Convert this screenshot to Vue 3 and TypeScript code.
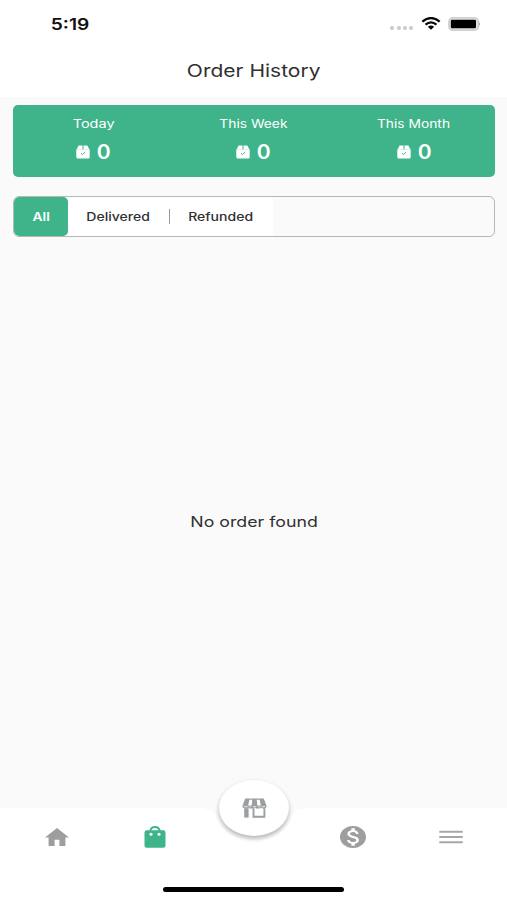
<script setup lang="ts">
import { ref } from 'vue'

interface Stat {
  label: string
  count: number
  key: string
}

const stats: Stat[] = [
  { label: 'Today', count: 0, key: 'today' },
  { label: 'This Week', count: 0, key: 'week' },
  { label: 'This Month', count: 0, key: 'month' },
]

const tabs: string[] = ['All', 'Delivered', 'Refunded']
const active = ref<string>('All')
</script>

<template>
  <div class="screen">
    <header class="top">
      <div class="status">
        <span class="time"><span class="wide">5:19</span></span>
        <div class="signals">
          <span class="dots"><i v-for="n in 4" :key="n"></i></span>
          <svg class="wifi" viewBox="0 0 20 13" preserveAspectRatio="none">
            <path d="M1.3 4.7Q10-2.6 18.7 4.7M4.5 7.6Q10 3.1 15.5 7.6" fill="none" stroke="#080808" stroke-width="2.3" />
            <path d="M6.8 9.8Q10 7.2 13.2 9.8L10 12.8Z" fill="#080808" />
          </svg>
          <svg class="battery" viewBox="0 0 33 14">
            <rect x=".9" y=".9" width="29.4" height="12.2" rx="3.6" fill="#e6e6e6" stroke="#c4c4c4" stroke-width="1.3" />
            <rect x="2.8" y="2.8" width="25.2" height="8.4" rx="1.2" fill="#000" />
            <path d="M31.2 5.1Q33.4 7 31.2 8.9Z" fill="#a5a5a5" />
          </svg>
        </div>
      </div>
      <h1 class="title"><span class="wide">Order History</span></h1>
    </header>

    <main class="content">
      <section class="stats">
        <div v-for="s in stats" :key="s.key" class="stat">
          <span class="label"><span class="wide" :class="s.key">{{ s.label }}</span></span>
          <div class="count">
            <svg class="box" viewBox="0 0 14 14">
              <path d="M2.7.6H6.3V4.2H.7ZM7.7.6H11.3L13.3 4.2H7.7Z" fill="#fff" />
              <path d="M.3 4.3H13.7V12Q13.7 13.5 12.2 13.5H1.8Q.3 13.5.3 12Z" fill="#fff" />
              <path d="M5 8.3 6.5 9.6 9.2 7" fill="none" stroke="#3fb48a" stroke-width="1" />
              <path d="M6.3.6H7.7V4.2H6.3Z" fill="#a9dcc8" />
            </svg>
            <span class="wide num">{{ s.count }}</span>
          </div>
        </div>
      </section>

      <nav class="tabs">
        <button
          v-for="t in tabs"
          :key="t"
          class="tab"
          :class="[t.toLowerCase(), { active: active === t }]"
          @click="active = t"
        >
          <span class="wide">{{ t }}</span>
        </button>
      </nav>

      <p class="empty"><span class="wide">No order found</span></p>
    </main>

    <footer class="bottom">
      <svg class="notch" viewBox="0 0 100 40">
        <path d="M0 0H100V1C91 1 89 5 87 10C81 25 67 32 50 32S19 25 13 10C11 5 9 1 0 1Z" fill="#fafafa" />
      </svg>
      <div class="items">
        <a class="item">
          <svg width="24" height="18" viewBox="2 3 20 17" preserveAspectRatio="none">
            <path d="M10 20v-6h4v6h5v-8h3L12 3 2 12h3v8z" fill="#9e9e9e" />
          </svg>
        </a>
        <a class="item">
          <svg width="22" height="22" viewBox="0 0 22 22">
            <path d="M6.3 5.5C6.3-.5 15.7-.5 15.7 5.5" fill="none" stroke="#3fb48a" stroke-width="2" />
            <rect x=".5" y="4.3" width="21" height="17.4" rx="2.2" fill="#3fb48a" />
            <circle cx="7" cy="8.3" r="1.5" fill="#fff" />
            <circle cx="15" cy="8.3" r="1.5" fill="#fff" />
          </svg>
        </a>
        <span class="item"></span>
        <a class="item">
          <svg width="26" height="22" viewBox="2 2 20 20" preserveAspectRatio="none">
            <path d="M12 2C6.48 2 2 6.48 2 12s4.48 10 10 10 10-4.48 10-10S17.52 2 12 2zm1.41 16.09V20h-2.67v-1.93c-1.71-.36-3.16-1.46-3.27-3.4h1.96c.1 1.05.82 1.87 2.65 1.87 1.96 0 2.4-.98 2.4-1.59 0-.83-.44-1.61-2.67-2.14-2.48-.6-4.18-1.62-4.18-3.67 0-1.72 1.39-2.84 3.11-3.21V4h2.67v1.95c1.86.45 2.79 1.86 2.85 3.39H14.3c-.05-1.11-.64-1.87-2.22-1.87-1.5 0-2.4.68-2.4 1.64 0 .84.65 1.39 2.67 1.91s4.18 1.39 4.18 3.91c-.01 1.83-1.38 2.83-3.12 3.16z" fill="#9e9e9e" />
          </svg>
        </a>
        <a class="item">
          <svg width="24" height="14" viewBox="0 0 24 14">
            <path d="M.3 1.7H23.7M.3 7H23.7M.3 12.3H23.7" stroke="#a6a6a6" stroke-width="2" />
          </svg>
        </a>
      </div>
      <div class="home-bar"></div>
      <button class="fab" aria-label="Store">
        <svg width="25" height="20" viewBox="0 0 25 20">
          <path d="M3.2.5H21.8L24.7 8.2Q24.2 10.6 21.8 10.6Q20 10.6 19 9.4Q17.8 10.6 15.8 10.6Q14 10.6 12.5 9.4Q11 10.6 9.2 10.6Q7.2 10.6 6 9.4Q5 10.6 3.2 10.6Q.8 10.6 .3 8.2Z" fill="#9a9fa1" />
          <path d="M7.4 1.8H10.2L9.7 7.6H6.1ZM14.8 1.8H17.6L18.9 7.6H15.3Z" fill="#fff" />
          <path d="M1.8 8.2Q3.6 9.7 5.5 8.2M7.2 8.8H8.6M10.8 8.3Q12.5 9.7 14.2 8.3M16.4 8.8H17.8M19.5 8.2Q21.4 9.7 23.2 8.2" fill="none" stroke="#fff" stroke-width=".8" />
          <path d="M2.2 10.2H6.6V19.6H2.2Z" fill="#9a9fa1" />
          <path d="M11.5 10.2V18.7H22.4V10.2" fill="none" stroke="#9a9fa1" stroke-width="1.9" />
        </svg>
      </button>
    </footer>
  </div>
</template>

<style>
body {
  margin: 0;
  background: #fafafa;
}
</style>

<style scoped>
.screen {
  width: 507px;
  height: 900px;
  display: flex;
  flex-direction: column;
  overflow: hidden;
  background: #fafafa;
  color: #303030;
  font-family: Inter, "Liberation Sans", sans-serif;
}
.wide {
  display: inline-block;
  white-space: nowrap;
  transform: scaleX(1.2);
}
.top {
  height: 97px;
  background: #fff;
  box-shadow: 0 0 2px rgba(0, 0, 0, 0.02);
}
.status {
  height: 47px;
  display: flex;
  justify-content: space-between;
  align-items: center;
  padding: 0 26px 0 51px;
}
.time {
  width: 39px;
  display: flex;
  justify-content: center;
  font-size: 16px;
  line-height: 20px;
  font-weight: 600;
  color: #111;
}
.signals {
  display: flex;
  align-items: center;
}
.dots {
  display: flex;
  gap: 2.2px;
  padding-top: 8px;
  margin-right: 8px;
}
.dots i {
  width: 4px;
  height: 4px;
  border-radius: 50%;
  background: #cacaca;
}
.wifi {
  width: 20px;
  height: 13px;
  margin-right: 7px;
}
.battery {
  width: 33px;
  height: 14px;
}
.title {
  margin: 12px 0 0;
  text-align: center;
  font-size: 17.5px;
  line-height: 24px;
  font-weight: 400;
}
.content {
  flex: 1;
  display: flex;
  flex-direction: column;
  padding: 8px 12px 0 13px;
}
.stats {
  height: 72px;
  box-sizing: border-box;
  display: grid;
  grid-template-columns: repeat(3, 1fr);
  padding: 11px 1px 0 0;
  border-radius: 5px;
  background: #3fb48a;
  color: #fff;
}
.stat {
  display: flex;
  flex-direction: column;
  align-items: center;
}
.label {
  font-size: 11.5px;
  line-height: 16px;
}
.today {
  transform: scaleX(1.26);
}
.count {
  height: 24px;
  margin-top: 8px;
  display: flex;
  align-items: center;
  gap: 7px;
}
.box {
  width: 14px;
  height: 14px;
}
.num {
  font-size: 20px;
  line-height: 24px;
  font-weight: 600;
  width: 13px;
  text-align: center;
  transform: scaleX(1.05);
}
.tabs {
  height: 41px;
  box-sizing: border-box;
  margin-top: 19px;
  display: flex;
  border: 1.5px solid #b5b8b8;
  border-radius: 6px;
  overflow: hidden;
}
.tab {
  position: relative;
  border: 0;
  padding: 0;
  background: #fff;
  color: #303030;
  font: 500 11.5px/16px Inter, "Liberation Sans", sans-serif;
}
.tab.all {
  width: 54px;
}
.tab.delivered {
  width: 101px;
}
.tab.refunded {
  width: 104px;
}
.tab.active {
  background: #3fb48a;
  color: #fff;
  border-radius: 5px;
  font-weight: 600;
}
.delivered .wide,
.refunded .wide {
  transform: scaleX(1.22);
}
.delivered::after {
  content: '';
  position: absolute;
  right: -1px;
  top: 12px;
  z-index: 1;
  width: 1.5px;
  height: 15px;
  background: #9a9a9a;
}
.empty {
  margin: 273px 0 0;
  text-align: center;
  font-size: 14.5px;
  line-height: 24px;
}
.empty .wide {
  transform: scaleX(1.225);
}
.bottom {
  position: relative;
  height: 92px;
  background: #fff;
}
.items {
  height: 58px;
  display: grid;
  grid-template-columns: repeat(5, 98.7px);
  justify-content: center;
  padding-left: 1px;
}
.item {
  display: flex;
  align-items: center;
  justify-content: center;
}
.notch {
  position: absolute;
  left: 204px;
  top: 0;
  width: 100px;
  height: 40px;
}
.fab {
  position: absolute;
  left: 219px;
  top: -28px;
  width: 70px;
  height: 56px;
  display: flex;
  align-items: center;
  justify-content: center;
  padding: 0;
  border: 0;
  border-radius: 50%;
  background: #fff;
  box-shadow: 0 3px 4px rgba(0, 0, 0, 0.22), 0 1px 5px rgba(0, 0, 0, 0.08);
}
.home-bar {
  width: 181px;
  height: 5px;
  margin: 21px auto 0;
  border-radius: 3px;
  background: #000;
}
</style>
